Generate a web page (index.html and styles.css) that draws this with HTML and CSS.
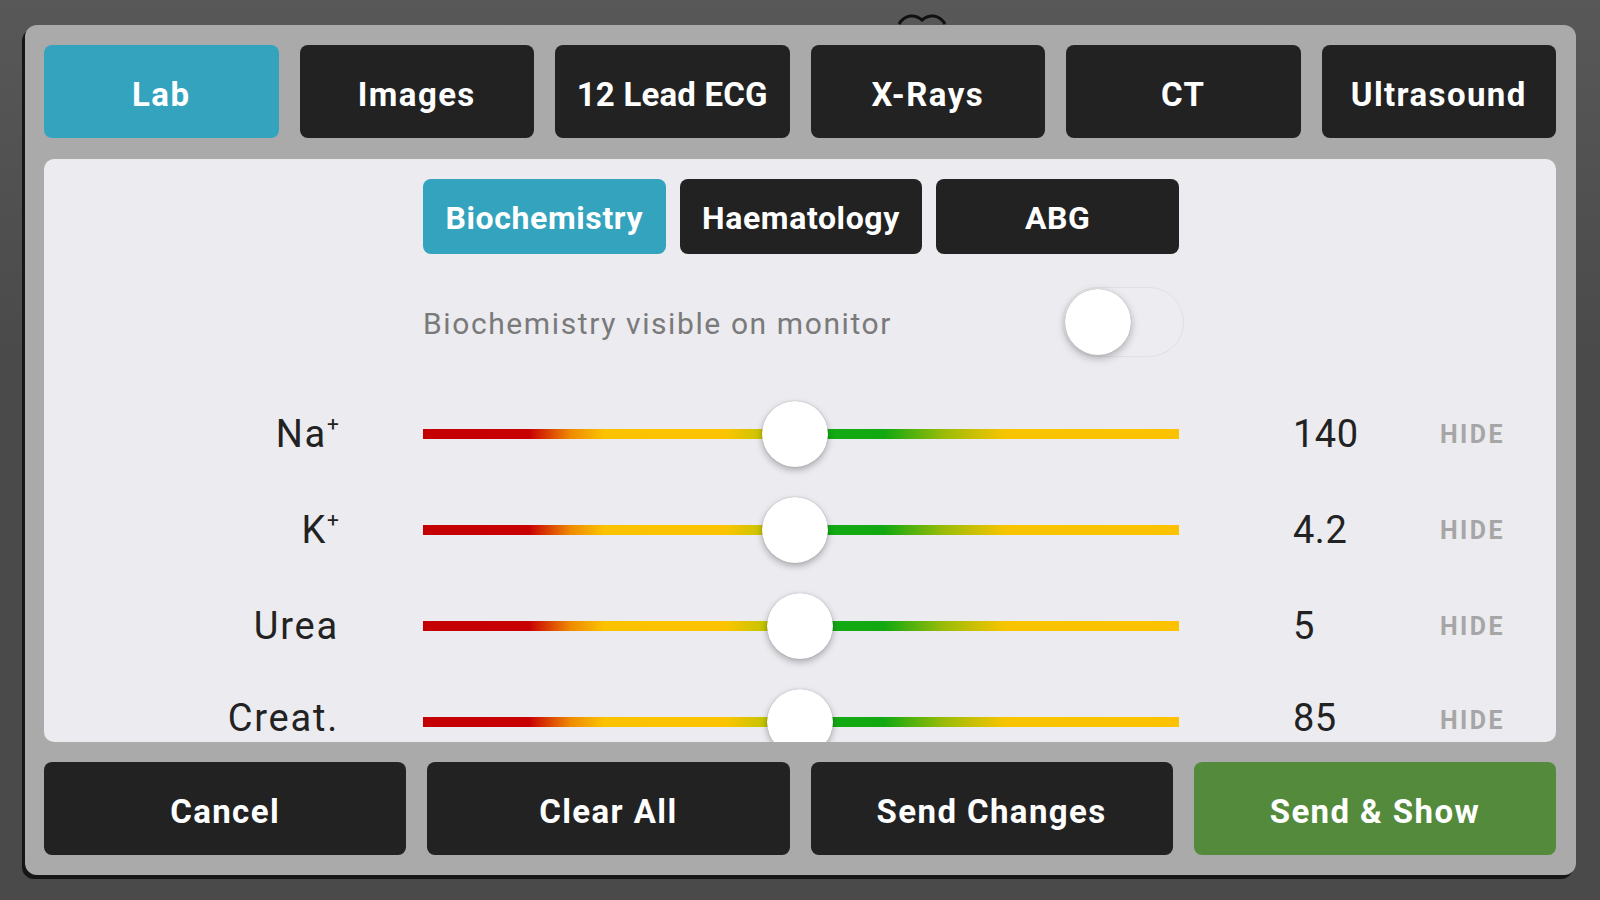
FILE: index.html
```html
<!DOCTYPE html>
<html>
<head>
<meta charset="utf-8">
<link rel="stylesheet" href="styles.css">
</head>
<body>
<div class="screen">
  <svg class="bg-heart" width="50" height="14" viewBox="0 0 50 14"><path d="M2 12 C8 2 18 2 25 8 C32 2 42 2 48 12" fill="none" stroke="#111" stroke-width="3"/></svg>
  <div class="dialog">
    <div class="tabs">
      <div class="btn active">Lab</div>
      <div class="btn">Images</div>
      <div class="btn narrow">12 Lead ECG</div>
      <div class="btn">X-Rays</div>
      <div class="btn">CT</div>
      <div class="btn">Ultrasound</div>
    </div>
    <div class="panel">
      <div class="row subrow">
        <div class="subtabs">
          <div class="btn sub active">Biochemistry</div>
          <div class="btn sub">Haematology</div>
          <div class="btn sub">ABG</div>
        </div>
      </div>
      <div class="row togglerow">
        <div class="toggle-label">Biochemistry visible on monitor</div>
        <div class="toggle"><div class="knob"></div></div>
      </div>
      <div class="row slider">
        <div class="label">Na<sup>+</sup></div>
        <div class="track"><div class="bar"></div><div class="thumb" style="left:49.2%"></div></div>
        <div class="value">140</div>
        <div class="hide">HIDE</div>
      </div>
      <div class="row slider">
        <div class="label">K<sup>+</sup></div>
        <div class="track"><div class="bar"></div><div class="thumb" style="left:49.2%"></div></div>
        <div class="value">4.2</div>
        <div class="hide">HIDE</div>
      </div>
      <div class="row slider">
        <div class="label">Urea</div>
        <div class="track"><div class="bar"></div><div class="thumb" style="left:49.9%"></div></div>
        <div class="value">5</div>
        <div class="hide">HIDE</div>
      </div>
      <div class="row slider last">
        <div class="label">Creat.</div>
        <div class="track"><div class="bar"></div><div class="thumb" style="left:49.9%"></div></div>
        <div class="value">85</div>
        <div class="hide">HIDE</div>
      </div>
    </div>
    <div class="actions">
      <div class="btn">Cancel</div>
      <div class="btn">Clear All</div>
      <div class="btn">Send Changes</div>
      <div class="btn green">Send &amp; Show</div>
    </div>
  </div>
</div>
</body>
</html>
```
FILE: styles.css
```css
html, body {
  margin: 0;
  padding: 0;
}
body {
  width: 1600px;
  height: 900px;
  overflow: hidden;
  background: #4c4c4c;
  font-family: Roboto, "Liberation Sans", sans-serif;
}
.screen {
  position: relative;
  width: 1600px;
  height: 900px;
  padding-top: 25px;
  box-sizing: border-box;
  background: linear-gradient(#585858, #4a4a4a 40%, #4a4a4a);
}
.bg-heart {
  position: absolute;
  left: 897px;
  top: 12px;
}
.dialog {
  position: relative;
  margin-left: 25px;
  width: 1551px;
  height: 850px;
  box-sizing: border-box;
  padding: 20px 20px 20px 19px;
  background: #aaaaaa;
  border-radius: 12px;
  box-shadow: -3px 4px 0 #161616;
  display: flex;
  flex-direction: column;
}
.btn {
  background: #222222;
  color: #ffffff;
  border-radius: 8px;
  display: flex;
  align-items: center;
  justify-content: center;
  font-weight: 700;
  font-size: 33px;
  letter-spacing: 1.4px;
  padding-top: 5px;
  box-sizing: border-box;
}
.btn.narrow {
  letter-spacing: 0.2px;
}
.btn.active {
  background: #34a3be;
}
.btn.green {
  background: #548a3c;
}
.tabs {
  display: grid;
  grid-template-columns: repeat(6, 1fr);
  column-gap: 21px;
  height: 93px;
  flex: none;
}
.panel {
  margin-top: 21px;
  height: 583px;
  flex: none;
  background: #ebebf0;
  border-radius: 10px;
  overflow: hidden;
  padding-top: 20px;
  box-sizing: border-box;
}
.row {
  display: grid;
  grid-template-columns: 379px 756px 114px 147px 1fr;
  align-items: center;
}
.subrow {
  height: 75px;
}
.subtabs {
  grid-column: 2;
  display: grid;
  grid-template-columns: repeat(3, 1fr);
  column-gap: 14px;
  height: 75px;
}
.btn.sub {
  font-size: 32px;
  letter-spacing: 0.6px;
  padding-top: 3px;
}
.togglerow {
  margin-top: 33px;
  height: 70px;
}
.toggle-label {
  grid-column: 2;
  grid-row: 1;
  font-size: 30px;
  color: #7a7a7a;
  letter-spacing: 1.6px;
  padding-top: 3px;
}
.toggle {
  grid-column: 2;
  grid-row: 1;
  justify-self: end;
  margin-right: -5px;
  width: 122px;
  height: 70px;
  box-sizing: border-box;
  border: 1.5px solid #e0e0e4;
  border-radius: 35px;
  background: #ededf1;
  display: flex;
  align-items: center;
  padding-left: 2px;
}
.knob {
  width: 66px;
  height: 66px;
  border-radius: 50%;
  background: #ffffff;
  box-shadow: 0 3px 8px rgba(0, 0, 0, 0.28), 0 0 1px rgba(0, 0, 0, 0.3);
}
.togglerow + .slider {
  margin-top: 29px;
}
.slider {
  height: 96px;
}
.slider.last {
  height: 68px;
  align-items: start;
}
.slider.last .label,
.slider.last .value {
  margin-top: 25px;
}
.slider.last .track {
  margin-top: 43px;
}
.slider.last .hide {
  margin-top: 34px;
}
.label {
  grid-column: 1;
  justify-self: end;
  padding-right: 84px;
  font-size: 38px;
  line-height: 1;
  color: #222222;
  letter-spacing: 1.8px;
}
.label sup {
  font-size: 21px;
  vertical-align: 16px;
  line-height: 0;
  letter-spacing: 0;
}
.track {
  grid-column: 2;
  position: relative;
  height: 10px;
}
.bar {
  height: 10px;
  background: linear-gradient(to right,
    #c40000 0%, #c80000 14%, #ee8a00 19.5%, #fcc200 24%,
    #fcc400 40%, #c8c400 45%, #7ab800 48%,
    #14aa14 52%, #12a812 61%, #9cbc08 69%, #f8c400 77%, #fcc200 100%);
}
.thumb {
  position: absolute;
  top: 50%;
  width: 66px;
  height: 66px;
  margin-left: -33px;
  margin-top: -33px;
  border-radius: 50%;
  background: #ffffff;
  box-shadow: 0 3px 7px rgba(0, 0, 0, 0.28), 0 0 1px rgba(0, 0, 0, 0.35);
}
.value {
  grid-column: 4;
  font-size: 38px;
  line-height: 1;
  color: #222222;
  letter-spacing: 0.5px;
}
.hide {
  grid-column: 5;
  font-size: 25px;
  line-height: 1;
  font-weight: 700;
  color: #a6a6a6;
  letter-spacing: 2.4px;
}
.actions {
  margin-top: 20px;
  display: grid;
  grid-template-columns: repeat(4, 1fr);
  column-gap: 21px;
  height: 93px;
  flex: none;
}
```
